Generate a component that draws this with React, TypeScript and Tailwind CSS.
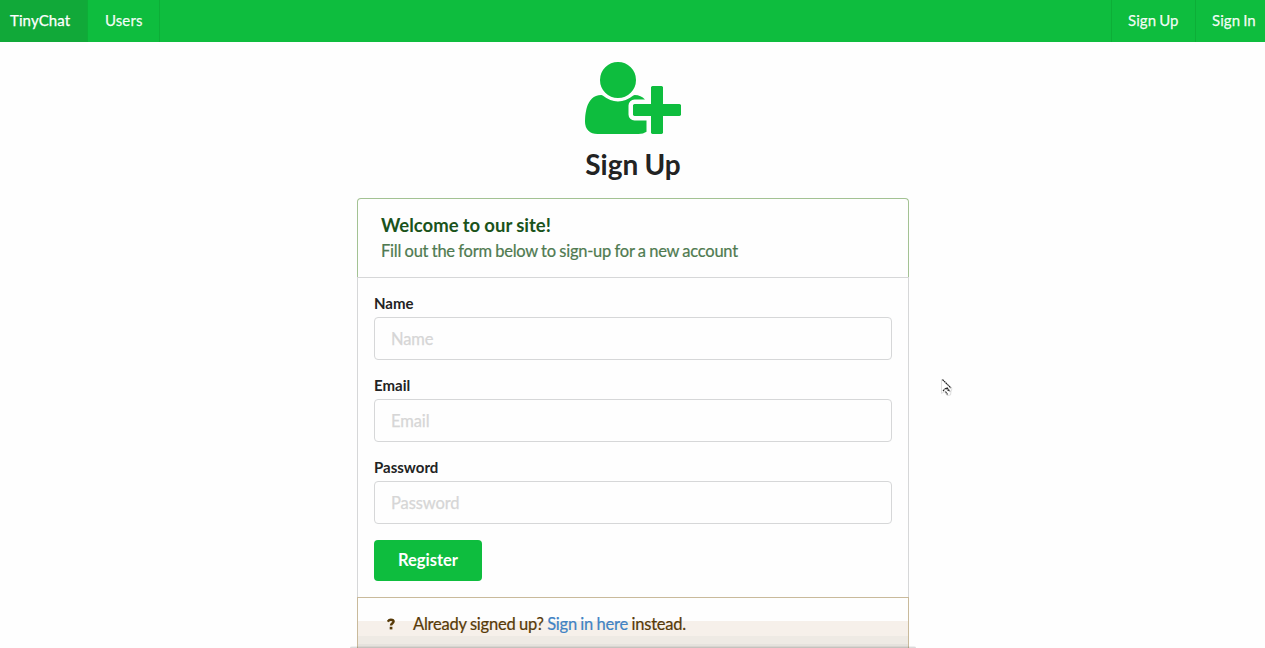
import type { ReactNode } from "react";

function NavItem({ children, className = "" }: { children: ReactNode; className?: string }) {
  return (
    <a className={`flex h-full shrink-0 items-center border-[#0dae37] pb-[2px] text-[15px] leading-5 tracking-[0.1px] [word-spacing:-1px] [-webkit-text-stroke:0.25px] ${className}`}>
      {children}
    </a>
  );
}

function UserPlusIcon() {
  return (
    <svg viewBox="0 0 2048 1792" className="h-[84px] w-[96px] fill-[#0ebd3e]" aria-hidden="true">
      <path d="M704 896q-159 0-271.5-112.5t-112.5-271.5 112.5-271.5 271.5-112.5 271.5 112.5 112.5 271.5-112.5 271.5-271.5 112.5zm960 128h352q13 0 22.5 9.5t9.5 22.5v192q0 13-9.5 22.5t-22.5 9.5h-352v352q0 13-9.5 22.5t-22.5 9.5h-192q-13 0-22.5-9.5t-9.5-22.5v-352h-352q-13 0-22.5-9.5t-9.5-22.5v-192q0-13 9.5-22.5t22.5-9.5h352v-352q0-13 9.5-22.5t22.5-9.5h192q13 0 22.5 9.5t9.5 22.5v352zm-736 224q0 52 38 90t90 38h256v238q-68 50-171 50h-874q-121 0-194-69t-73-190q0-53 3.5-103.5t14-109 26.5-108.5 43-97.5 62-81 85.5-53.5 111.5-20q19 0 39 17 79 61 154.5 91.5t164.5 30.5 164.5-30.5 154.5-91.5q20-17 39-17 132 0 217 96h-223q-52 0-90 38t-38 90v192z" />
    </svg>
  );
}

function Field({ label, type = "text" }: { label: string; type?: string }) {
  return (
    <label className="block h-[82px]">
      <span className="block h-[22px] pl-[0.5px] text-[15px] leading-[16px] font-bold text-[#222323]">{label}</span>
      <input
        type={type}
        placeholder={label}
        className="block h-[43px] w-full rounded-[4px] border border-[#d6d7d8] bg-[#fefefe] px-[16.5px] pt-px text-[16.5px] tracking-[-0.1px] text-[#222323] outline-none placeholder:text-[#d6d6d6] [-webkit-text-stroke:0.25px]"
      />
    </label>
  );
}

function Cursor() {
  return (
    <svg viewBox="0 0 14 19" className="absolute top-[378px] left-[940px] h-[19px] w-[14px]" aria-hidden="true">
      <path d="M1.5 1.5v14l3-2 2.5 4 3.5-.5.5-3.5 1-3z" fill="#fff" stroke="#dedede" strokeWidth="1" />
      <path d="M2.5 1.5l8.5 8.5M3 13l3-3.2 2.5 3M7 9.5l3 4M5.5 13.5l2 3" fill="none" stroke="#222" strokeWidth="1.1" strokeDasharray="1.8 .5" />
    </svg>
  );
}

export default function App() {
  return (
    <div className="relative flex h-[648px] w-full flex-col overflow-hidden bg-[#fefefe] font-['Lato',sans-serif]">
      <nav className="flex h-[42px] shrink-0 bg-[#0ebd3e] text-white/95">
        <NavItem className="w-[88px] border-r bg-[#11a939] pl-[10px] text-white">TinyChat</NavItem>
        <NavItem className="w-[72px] border-r pl-[17px]">Users</NavItem>
        <NavItem className="ml-auto w-[84px] border-l pl-4">Sign Up</NavItem>
        <NavItem className="w-[70px] border-l pl-4">Sign In</NavItem>
      </nav>

      <main className="mx-auto flex w-[552px] flex-col pt-[14px]">
        <header className="flex h-[142px] flex-col items-center">
          <UserPlusIcon />
          <h1 className="mt-[6px] pl-px text-[28px] leading-[36px] font-bold text-[#222323] [word-spacing:-0.5px]">Sign Up</h1>
        </header>

        <section className="h-[79px] rounded-t-[4px] border border-b-0 border-[#a3c293] px-[23.5px] pt-[15px]">
          <h2 className="text-[18.5px] leading-[22px] font-bold text-[#1a531b] [word-spacing:-0.3px]">Welcome to our site!</h2>
          <p className="mt-[4px] text-[16.5px] leading-[22px] tracking-[-0.25px] text-[#4f7a50] [word-spacing:-0.5px] [-webkit-text-stroke:0.2px]">
            Fill out the form below to sign-up for a new account
          </p>
        </section>

        <form className="h-[320px] border border-b-0 border-[#d6d7d8] px-4 pt-[17px]">
          <Field label="Name" />
          <Field label="Email" />
          <Field label="Password" type="password" />
          <button type="button" className="-mt-px h-[41px] w-[108px] rounded-[4px] bg-[#0ebd3e] pl-px text-[16.5px] font-bold text-white">
            Register
          </button>
        </form>

        <section className="flex h-[52px] border border-b-0 border-[#c9ba9b] bg-[linear-gradient(to_bottom,#fefefe_0_23px,#f6f0ea_23px_38px,#eeeae4_38px_46px,#e5e2dd_46px)] pt-[15px] pl-[29px] text-[16.5px] leading-[22px] tracking-[-0.22px] text-[#573a08] [word-spacing:-0.5px] [-webkit-text-stroke:0.2px]">
          <svg viewBox="0 0 8 12" className="mt-[5px] mr-[18.5px] h-[12px] w-[8px]" aria-hidden="true">
            <path d="M.8 3.7C1.6 2.2 2.6 1.7 3.8 1.7c1.8 0 2.8.7 2.8 1.9C6.6 5.3 4 5.2 4 7.6" fill="none" stroke="#573a08" strokeWidth="2.4" />
            <path d="M2.7 8.8h2.7v2.6H2.7z" fill="#573a08" />
          </svg>
          <p>
            Already signed up? <a className="text-[#4183c4]">Sign in here</a> instead.
          </p>
        </section>
      </main>

      <div className="absolute bottom-0 left-[350px] h-[2px] w-[566px] rounded-t-[2px] bg-[linear-gradient(to_bottom,rgb(0_0_0/0.06)_0_1px,rgb(0_0_0/0.14)_1px)]" />
      <Cursor />
    </div>
  );
}
